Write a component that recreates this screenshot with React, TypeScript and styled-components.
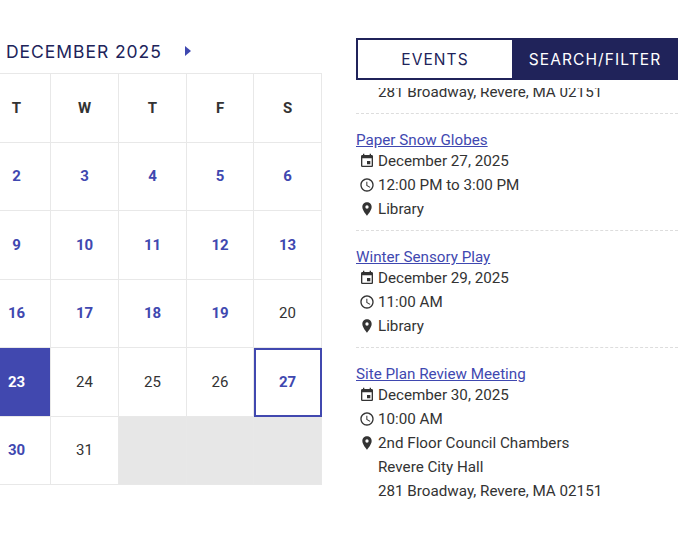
import { MdAccessTime, MdEvent, MdPlace } from 'react-icons/md';
import { createGlobalStyle, styled } from 'styled-components';

const GlobalStyle = createGlobalStyle`
  html, body {
    margin: 0;
    height: 100%;
    overflow: hidden;
    background: #fff;
    font-family: Roboto, "Liberation Sans", sans-serif;
    color: #333;
  }
`;

type Day = { label: string; kind?: 'link' | 'plain' | 'today' | 'selected' | 'empty' };

const link = (label: string): Day => ({ label, kind: 'link' });
const plain = (label: string): Day => ({ label, kind: 'plain' });
const empty: Day = { label: '', kind: 'empty' };

const dayNames = ['T', 'W', 'T', 'F', 'S'];

const days: Day[] = [
  link('2'), link('3'), link('4'), link('5'), link('6'),
  link('9'), link('10'), link('11'), link('12'), link('13'),
  link('16'), link('17'), link('18'), link('19'), plain('20'),
  { label: '23', kind: 'today' }, plain('24'), plain('25'), plain('26'), { label: '27', kind: 'selected' },
  link('30'), plain('31'), empty, empty, empty,
];

const events = [
  {
    title: 'Paper Snow Globes',
    date: 'December 27, 2025',
    time: '12:00 PM to 3:00 PM',
    place: ['Library'],
  },
  {
    title: 'Winter Sensory Play',
    date: 'December 29, 2025',
    time: '11:00 AM',
    place: ['Library'],
  },
  {
    title: 'Site Plan Review Meeting',
    date: 'December 30, 2025',
    time: '10:00 AM',
    place: ['2nd Floor Council Chambers', 'Revere City Hall', '281 Broadway, Revere, MA 02151'],
  },
];

export default function App() {
  return (
    <>
      <GlobalStyle />
      <Page>
        <CalendarPanel>
          <MonthBar>
            <MonthTitle>DECEMBER 2025</MonthTitle>
            <NextArrow aria-label="Next month" />
          </MonthBar>
          <CalendarGrid>
            {dayNames.map((name, i) => (
              <HeadCell key={i}>{name}</HeadCell>
            ))}
            {days.map((day, i) => (
              <DayCell key={i} $kind={day.kind}>
                {day.label}
              </DayCell>
            ))}
          </CalendarGrid>
        </CalendarPanel>
        <EventsPanel>
          <Tabs>
            <Tab>EVENTS</Tab>
            <Tab $active>SEARCH/FILTER</Tab>
          </Tabs>
          <EventList>
            <ClippedItem>
              <ClippedAddress>281 Broadway, Revere, MA 02151</ClippedAddress>
            </ClippedItem>
            {events.map((event, i) => (
              <EventItem key={event.title} $last={i === events.length - 1}>
                <EventTitle href="#event">{event.title}</EventTitle>
                <InfoRow>
                  <IconSlot><MdEvent size={16} /></IconSlot>
                  <span>{event.date}</span>
                </InfoRow>
                <InfoRow>
                  <IconSlot><MdAccessTime size={16} /></IconSlot>
                  <span>{event.time}</span>
                </InfoRow>
                <InfoRow>
                  <IconSlot><MdPlace size={16} /></IconSlot>
                  <span>
                    {event.place.map((line) => (
                      <PlaceLine key={line}>{line}</PlaceLine>
                    ))}
                  </span>
                </InfoRow>
              </EventItem>
            ))}
          </EventList>
        </EventsPanel>
      </Page>
    </>
  );
}

const Page = styled.main`
  display: flex;
  align-items: flex-start;
  width: 678px;
  height: 542px;
  overflow: hidden;
`;

const CalendarPanel = styled.section`
  flex: none;
  width: 322px;
  padding-top: 38px;
  overflow: hidden;
`;

const MonthBar = styled.div`
  display: flex;
  align-items: center;
  box-sizing: border-box;
  height: 35px;
  padding: 0 0 9px 6px;
`;

const MonthTitle = styled.h2`
  flex: none;
  width: 179px;
  margin: 0;
  font-family: Inter, sans-serif;
  font-size: 17.5px;
  font-weight: 400;
  letter-spacing: 0.95px;
  color: #20235a;
  white-space: nowrap;
`;

const NextArrow = styled.span`
  width: 0;
  height: 0;
  border-left: 6px solid #3f48b0;
  border-top: 5px solid transparent;
  border-bottom: 5px solid transparent;
`;

const CalendarGrid = styled.div`
  display: grid;
  grid-template-columns: 68px 68px 68px 67px 68px;
  grid-auto-rows: 68.5px;
  box-sizing: border-box;
  width: 339px;
  margin-left: -17px;
  border-top: 1px solid #e8e8e8;
`;

const HeadCell = styled.div`
  display: flex;
  align-items: center;
  justify-content: center;
  box-sizing: border-box;
  border-right: 1px solid #e8e8e8;
  border-bottom: 1px solid #e8e8e8;
  font-size: 15px;
  font-weight: 700;
  color: #333;
`;

const DayCell = styled.div<{ $kind?: Day['kind'] }>`
  display: flex;
  align-items: center;
  justify-content: center;
  box-sizing: border-box;
  border-right: 1px solid #e8e8e8;
  border-bottom: 1px solid #e8e8e8;
  font-size: 15px;
  font-weight: ${(p) => (p.$kind === 'plain' ? 400 : 700)};
  color: ${(p) => (p.$kind === 'today' ? '#fff' : p.$kind === 'plain' ? '#333' : '#3f48b0')};
  background: ${(p) => (p.$kind === 'today' ? '#4148af' : p.$kind === 'empty' ? '#e7e7e7' : '#fff')};
  ${(p) => p.$kind === 'selected' && 'outline: 2px solid #4148af; outline-offset: -2px;'}
`;

const EventsPanel = styled.section`
  flex: none;
  width: 322px;
  margin-left: 34px;
  padding-top: 38px;
`;

const Tabs = styled.div`
  display: flex;
  height: 42px;
`;

const Tab = styled.div<{ $active?: boolean }>`
  display: flex;
  flex: none;
  align-items: center;
  justify-content: center;
  box-sizing: border-box;
  width: ${(p) => (p.$active ? 166 : 156)}px;
  border: 2px solid #20235a;
  border-right-width: ${(p) => (p.$active ? 2 : 0)}px;
  background: ${(p) => (p.$active ? '#20235a' : '#fff')};
  color: ${(p) => (p.$active ? '#fff' : '#20235a')};
  font-family: Inter, sans-serif;
  font-size: 15.5px;
  letter-spacing: 1.1px;
`;

const EventList = styled.div`
  height: 414px;
  margin-top: 8px;
  overflow: hidden;
  font-size: 15.2px;
  line-height: 24px;
`;

const ClippedItem = styled.div`
  display: flow-root;
  box-sizing: border-box;
  height: 26px;
  padding-left: 22px;
  border-bottom: 1px dashed #ddd;
`;

const ClippedAddress = styled.div`
  margin-top: -8px;
  white-space: nowrap;
`;

const EventItem = styled.article<{ $last: boolean }>`
  padding: 15px 0 9px;
  border-bottom: ${(p) => (p.$last ? 'none' : '1px dashed #ddd')};
`;

const EventTitle = styled.a`
  display: block;
  height: 20px;
  line-height: 22px;
  color: #3f48b0;
  text-decoration: underline;
`;

const InfoRow = styled.div`
  display: flex;
  color: #333;
`;

const IconSlot = styled.span`
  display: flex;
  align-items: center;
  justify-content: center;
  flex: none;
  width: 22px;
  height: 24px;
`;

const PlaceLine = styled.span`
  display: block;
`;
